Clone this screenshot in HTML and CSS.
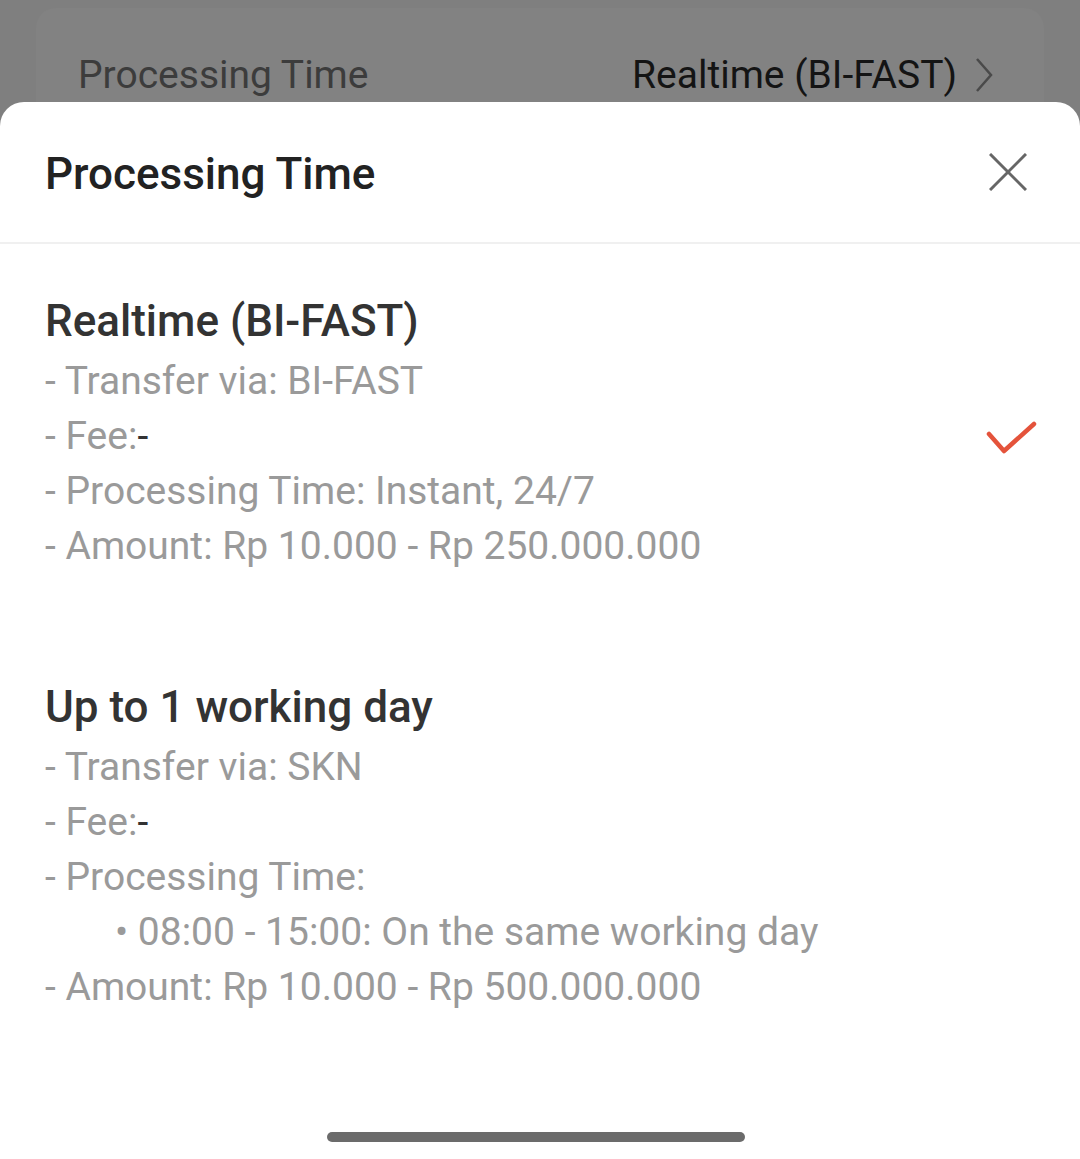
FILE: index.html
```html
<!DOCTYPE html>
<html lang="en">
<head>
    <meta charset="UTF-8">
    <meta name="viewport" content="width=device-width, initial-scale=1.0">
    <title>Processing Time</title>
    <link rel="stylesheet" href="styles.css">
</head>
<body>
    <div class="behind">
        <div class="behind-row">
            <span class="behind-label">Processing Time</span>
            <span class="behind-value">Realtime (BI-FAST)
                <svg class="chevron" width="18" height="36" viewBox="0 0 18 36">
                    <polyline points="2,2 16,18 2,34" fill="none" stroke="#4a4a4a" stroke-width="2.5"/>
                </svg>
            </span>
        </div>
    </div>

    <div class="sheet">
        <div class="sheet-header">
            <h1>Processing Time</h1>
            <svg class="close" width="38" height="38" viewBox="0 0 38 38">
                <line x1="1" y1="1" x2="37" y2="37" stroke="#666" stroke-width="3"/>
                <line x1="37" y1="1" x2="1" y2="37" stroke="#666" stroke-width="3"/>
            </svg>
        </div>

        <div class="options">
            <div class="option">
                <div class="option-text">
                    <div class="option-title">Realtime (BI-FAST)</div>
                    <div class="option-line">- Transfer via: BI-FAST</div>
                    <div class="option-line">- Fee:<span class="dash">-</span></div>
                    <div class="option-line">- Processing Time: Instant, 24/7</div>
                    <div class="option-line">- Amount: Rp 10.000 - Rp 250.000.000</div>
                </div>
                <svg class="check" width="52" height="38" viewBox="0 0 52 38">
                    <polyline points="3,13 18,30 48,3" fill="none" stroke="#e4533b" stroke-width="4.5" stroke-linecap="round" stroke-linejoin="round"/>
                </svg>
            </div>

            <div class="option">
                <div class="option-text">
                    <div class="option-title">Up to 1 working day</div>
                    <div class="option-line">- Transfer via: SKN</div>
                    <div class="option-line">- Fee:<span class="dash">-</span></div>
                    <div class="option-line">- Processing Time:</div>
                    <div class="option-line bullet">• 08:00 - 15:00: On the same working day</div>
                    <div class="option-line">- Amount: Rp 10.000 - Rp 500.000.000</div>
                </div>
            </div>
        </div>

        <div class="home-bar"></div>
    </div>
</body>
</html>
```

FILE: styles.css
```css
body {
    margin: 0;
    height: 1159px;
    overflow: hidden;
    background-color: #7f7f7f;
    font-family: Roboto, "Noto Sans", sans-serif;
}

.behind {
    margin: 8px 36px 0;
    height: 94px;
    background-color: #828282;
    border-radius: 20px 20px 0 0;
    box-sizing: border-box;
    padding: 45px 51px 0 42px;
}

.behind-row {
    display: flex;
    justify-content: space-between;
    align-items: center;
    font-size: 39px;
    line-height: 44px;
}

.behind-label {
    color: #3c3c3c;
}

.behind-value {
    color: #141414;
    display: flex;
    align-items: center;
    gap: 18px;
}

.sheet {
    height: 1057px;
    background-color: #fff;
    border-radius: 24px 24px 0 0;
    display: flex;
    flex-direction: column;
}

.sheet-header {
    height: 142px;
    box-sizing: border-box;
    padding: 0 53px 0 45px;
    display: flex;
    justify-content: space-between;
    align-items: center;
    border-bottom: 2px solid #f0f0f0;
}

.sheet-header h1 {
    margin: 4px 0 0;
    font-size: 44px;
    font-weight: 500;
    color: #222;
}

.options {
    padding: 44px 42px 0 45px;
}

.option {
    display: flex;
    justify-content: space-between;
    align-items: center;
}

.option + .option {
    margin-top: 100px;
}

.option-title {
    font-size: 44px;
    font-weight: 500;
    line-height: 66px;
    color: #333;
}

.option-line {
    font-size: 39px;
    line-height: 55px;
    color: #9a9a9a;
}

.option-line .dash {
    color: #333;
}

.option-line.bullet {
    padding-left: 70px;
}

.check {
    margin-top: 18px;
}

.home-bar {
    margin: auto 0 17px 327px;
    width: 418px;
    height: 10px;
    border-radius: 5px;
    background-color: #6b6b6b;
}
```
